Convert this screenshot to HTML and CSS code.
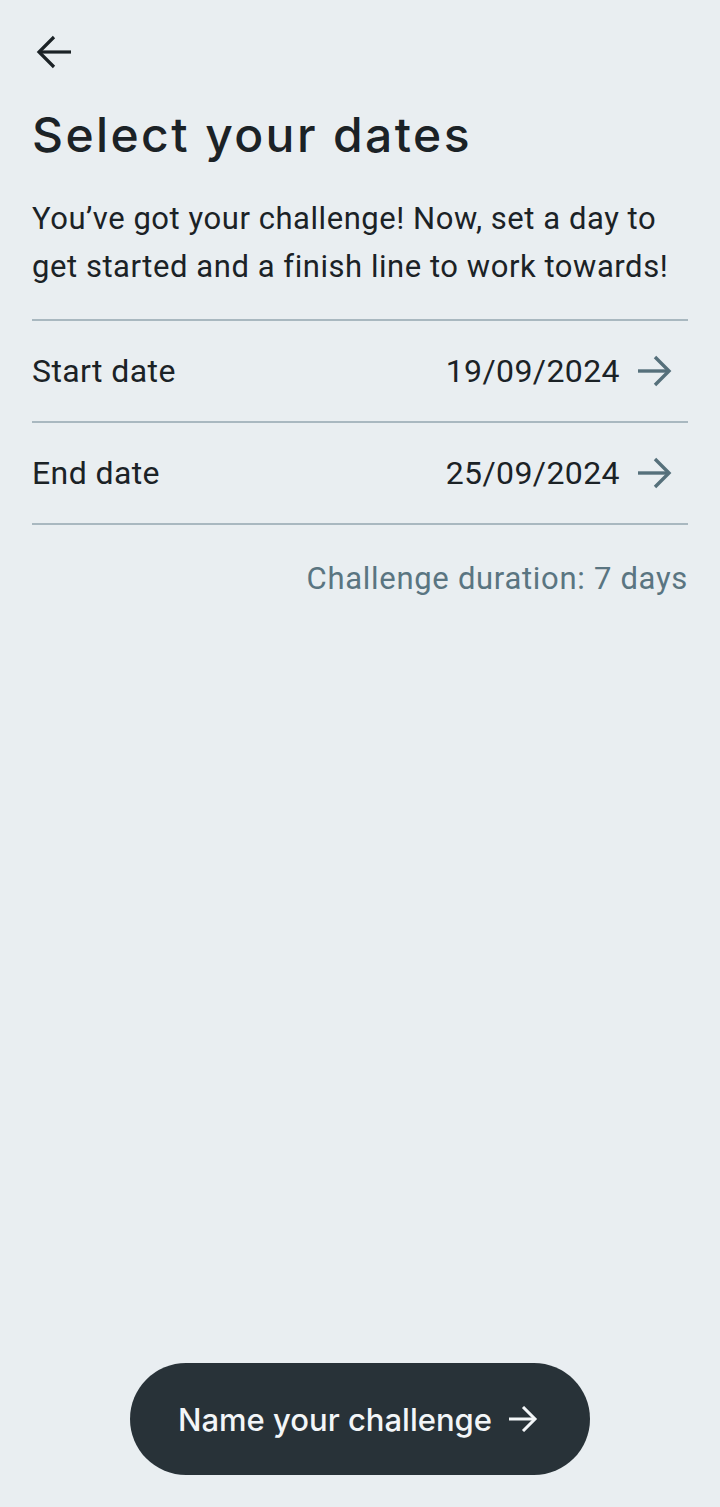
FILE: index.html
```html
<!DOCTYPE html>
<html lang="en">
<head>
<meta charset="utf-8">
<title>Select your dates</title>
<link rel="stylesheet" href="styles.css">
</head>
<body>
<div class="screen">
  <header class="topbar">
    <button class="back" aria-label="Back">
      <svg width="36" height="34" viewBox="0 0 36 34" fill="none" stroke="currentColor" stroke-width="3.2" stroke-linecap="butt" stroke-linejoin="miter">
        <path d="M35 17H4"/>
        <path d="M18 2L3 17l15 15"/>
      </svg>
    </button>
  </header>
  <h1 class="title">Select your dates</h1>
  <p class="intro">You’ve got your challenge! Now, set a day to get started and a finish line to work towards!</p>
  <ul class="dates">
    <li class="row">
      <span class="label">Start date</span>
      <span class="value">19/09/2024
        <svg class="chev" width="34" height="32" viewBox="0 0 34 32" fill="none" stroke="currentColor" stroke-width="3.4">
          <path d="M0 16h31"/>
          <path d="M17 2l14 14-14 14"/>
        </svg>
      </span>
    </li>
    <li class="row">
      <span class="label">End date</span>
      <span class="value">25/09/2024
        <svg class="chev" width="34" height="32" viewBox="0 0 34 32" fill="none" stroke="currentColor" stroke-width="3.4">
          <path d="M0 16h31"/>
          <path d="M17 2l14 14-14 14"/>
        </svg>
      </span>
    </li>
  </ul>
  <p class="duration">Challenge duration: 7 days</p>
  <div class="footer">
    <button class="cta">Name your challenge
      <svg width="30" height="26" viewBox="0 0 30 26" fill="none" stroke="currentColor" stroke-width="3">
        <path d="M1 13h26"/>
        <path d="M15 1l12 12-12 12"/>
      </svg>
    </button>
  </div>
</div>
</body>
</html>
```

FILE: styles.css
```css
* { box-sizing: border-box; }
html, body { margin: 0; padding: 0; }
body {
  background: #e9eef1;
  color: #1b2226;
  font-family: Roboto, "Liberation Sans", sans-serif;
}
.screen {
  min-height: 1507px;
  display: flex;
  flex-direction: column;
  padding: 0 32px 32px;
}
.topbar {
  height: 107px;
  display: flex;
  align-items: flex-start;
  padding-top: 35px;
}
.back {
  background: none;
  border: 0;
  padding: 0;
  margin-left: 4px;
  color: #1b2226;
  display: flex;
}
.title {
  font-family: Inter, "Liberation Sans", sans-serif;
  font-weight: 500;
  font-size: 48px;
  line-height: 56px;
  margin: 0;
  letter-spacing: 2.4px;
}
.intro {
  font-size: 31px;
  line-height: 48px;
  letter-spacing: 0.55px;
  margin: 32px 0 0;
}
.dates {
  list-style: none;
  margin: 28px 0 0;
  padding: 0;
  border-top: 2px solid #a9b8c0;
}
.row {
  height: 102px;
  border-bottom: 2px solid #a9b8c0;
  display: flex;
  align-items: center;
  justify-content: space-between;
  font-size: 32px;
  letter-spacing: 0.4px;
}
.value {
  display: flex;
  align-items: center;
  gap: 18px;
  padding-right: 16px;
}
.chev { color: #56707b; }
.duration {
  margin: 35px 0 0;
  text-align: right;
  font-size: 31px;
  letter-spacing: 0.7px;
  color: #5a7581;
}
.footer {
  margin-top: auto;
  display: flex;
  justify-content: center;
}
.cta {
  width: 460px;
  height: 112px;
  border: 0;
  border-radius: 56px;
  background: #283238;
  color: #f3f6f8;
  font-family: Inter, "Liberation Sans", sans-serif;
  font-weight: 500;
  font-size: 31px;
  display: flex;
  align-items: center;
  justify-content: center;
  gap: 16px;
  padding: 0 4px 0 0;
}
```
